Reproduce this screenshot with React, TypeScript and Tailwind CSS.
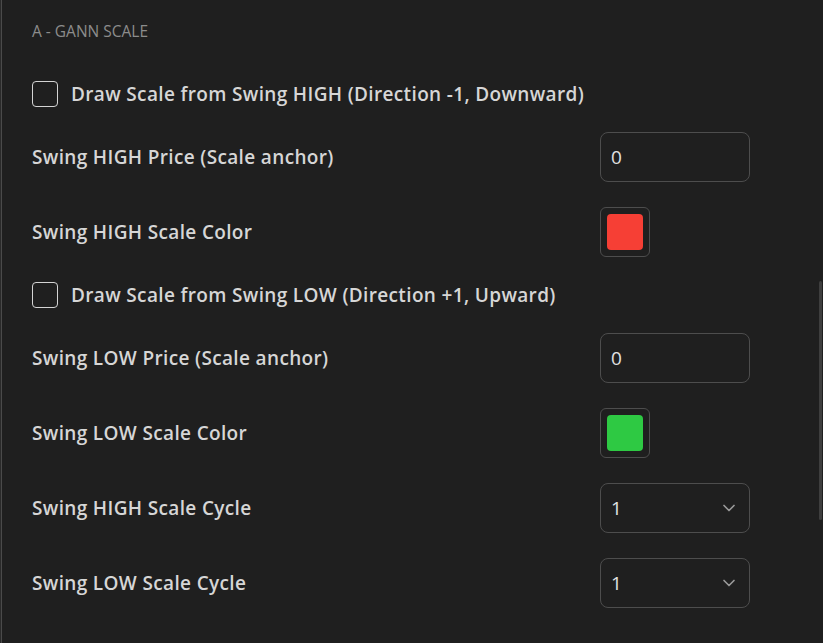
import { ChevronDown } from 'lucide-react';

type Row =
  | { kind: 'check'; label: string }
  | { kind: 'number'; label: string; value: string }
  | { kind: 'color'; label: string; color: string }
  | { kind: 'select'; label: string; value: string };

const rows: Row[] = [
  { kind: 'check', label: 'Draw Scale from Swing HIGH (Direction -1, Downward)' },
  { kind: 'number', label: 'Swing HIGH Price (Scale anchor)', value: '0' },
  { kind: 'color', label: 'Swing HIGH Scale Color', color: '#f63f35' },
  { kind: 'check', label: 'Draw Scale from Swing LOW (Direction +1, Upward)' },
  { kind: 'number', label: 'Swing LOW Price (Scale anchor)', value: '0' },
  { kind: 'color', label: 'Swing LOW Scale Color', color: '#2ec943' },
  { kind: 'select', label: 'Swing HIGH Scale Cycle', value: '1' },
  { kind: 'select', label: 'Swing LOW Scale Cycle', value: '1' },
];

const SettingRow = ({ row }: { row: Row }) => {
  if (row.kind === 'check') {
    return (
      <label className="flex items-center h-[26px] gap-[13px] cursor-pointer">
        <span className="w-[26px] h-[26px] rounded-[4px] border border-[#d4d4d4] shrink-0" />
        <span className="text-[19px] font-semibold tracking-[0.35px] text-[#d6d6d6]">{row.label}</span>
      </label>
    );
  }

  return (
    <div className="flex items-center h-[50px]">
      <span className="flex-1 text-[19px] font-semibold tracking-[0.35px] text-[#d6d6d6]">{row.label}</span>
      <div className="w-[150px]">
        {row.kind === 'number' && (
          <div className="h-[50px] rounded-[8px] border border-[#4d4d4d] flex items-center px-[10px] text-[19px] font-medium text-[#e2e2e2]">
            {row.value}
          </div>
        )}
        {row.kind === 'color' && (
          <div className="w-[50px] h-[50px] rounded-[6px] border border-[#4d4d4d] flex items-center justify-center">
            <div className="w-[36px] h-[36px] rounded-[4px]" style={{ backgroundColor: row.color }} />
          </div>
        )}
        {row.kind === 'select' && (
          <div className="h-[50px] rounded-[8px] border border-[#4d4d4d] flex items-center justify-between pl-[10px] pr-[10px] text-[19px] font-medium text-[#e2e2e2]">
            <span>{row.value}</span>
            <ChevronDown size={20} strokeWidth={2} className="text-[#9a9a9a]" />
          </div>
        )}
      </div>
    </div>
  );
};

export default function App() {
  return (
    <div className="w-[823px] h-[643px] flex bg-[#1f1f1f] overflow-hidden relative" style={{ fontFamily: '"Open Sans", sans-serif' }}>
      {/* chart edge peeking in from behind the dialog */}
      <div className="w-[1px] bg-[#2a2a2a] shrink-0" />
      <div className="w-[1px] bg-[#4a4a4a] shrink-0" />

      <div className="flex-1 pl-[30px] pr-[73px] pt-[21px]">
        <div className="text-[15.5px] leading-[20px] text-[#8c8c8c] uppercase mb-[40px]">A - Gann Scale</div>
        <div className="flex flex-col gap-[25px]">
          {rows.map((row, i) => (
            <SettingRow key={i} row={row} />
          ))}
        </div>
      </div>

      {/* scrollbar thumb */}
      <div className="absolute right-[1px] top-[281px] w-[3px] h-[239px] rounded-full bg-[#3e3e3e]" />
    </div>
  );
}
